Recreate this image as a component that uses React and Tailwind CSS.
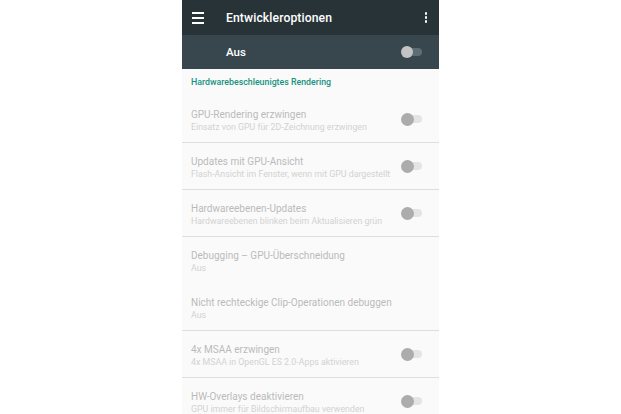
import React from "react";

const rows = [
  { t: "GPU-Rendering erzwingen", s: "Einsatz von GPU für 2D-Zeichnung erzwingen", sw: true, div: true },
  { t: "Updates mit GPU-Ansicht", s: "Flash-Ansicht im Fenster, wenn mit GPU dargestellt", sw: true, div: true },
  { t: "Hardwareebenen-Updates", s: "Hardwareebenen blinken beim Aktualisieren grün", sw: true, div: true },
  { t: "Debugging – GPU-Überschneidung", s: "Aus", sw: false, div: false },
  { t: "Nicht rechteckige Clip-Operationen debuggen", s: "Aus", sw: false, div: true },
  { t: "4x MSAA erzwingen", s: "4x MSAA in OpenGL ES 2.0-Apps aktivieren", sw: true, div: true },
  { t: "HW-Overlays deaktivieren", s: "GPU immer für Bildschirmaufbau verwenden", sw: true, div: false },
];

function RowSwitch() {
  return (
    <div className="relative w-[21px] h-[13px] flex items-center shrink-0">
      <div className="absolute left-[5px] right-0 h-[8px] rounded-full bg-[#e4e4e4]" />
      <div className="absolute left-0 w-[13px] h-[13px] rounded-full bg-[#acacac]" />
    </div>
  );
}

export default function App() {
  return (
    <div className="w-full min-h-[414px] bg-white" style={{ fontFamily: "Roboto, 'Noto Sans', sans-serif" }}>
      <div className="mx-auto w-[257px] h-[414px] overflow-hidden bg-[#fafafa]">
        <div className="h-[35px] bg-[#283338] flex items-center">
          <div className="w-[44px] pl-[10px] flex flex-col gap-[3px]">
            <div className="w-[12px] h-[2px] bg-white" />
            <div className="w-[12px] h-[2px] bg-white" />
            <div className="w-[12px] h-[2px] bg-white" />
          </div>
          <div className="flex-1 pt-[1px] text-white text-[12.2px] font-medium tracking-[0.1px]">Entwickleroptionen</div>
          <div className="w-[14px] mr-[6px] flex flex-col items-center gap-[1.5px]">
            <div className="w-[2.5px] h-[2.5px] rounded-full bg-white" />
            <div className="w-[2.5px] h-[2.5px] rounded-full bg-white" />
            <div className="w-[2.5px] h-[2.5px] rounded-full bg-white" />
          </div>
        </div>
        <div className="h-[34px] bg-[#38474e] flex items-center">
          <div className="w-[44px]" />
          <div className="flex-1 pt-[2px] text-white text-[11.5px] font-medium">Aus</div>
          <div className="relative w-[21px] h-[12px] mr-[17px] flex items-center">
            <div className="absolute left-[5px] right-0 h-[8px] rounded-full bg-[#5d6d74]" />
            <div className="absolute left-0 w-[12px] h-[12px] rounded-full bg-[#c4c4c4]" />
          </div>
        </div>
        <div className="h-[27px] flex items-center pl-[9px] text-[8.8px] font-medium text-[#16927f]">
          Hardwarebeschleunigtes Rendering
        </div>
        {rows.map((r, i) => (
          <div key={i} className={"h-[47px] flex items-center pl-[9px] pr-[17px] " + (r.div ? "border-b border-[#dedede]" : "border-b border-transparent")}>
            <div className="flex-1 flex flex-col pt-[3px]">
              <div className="text-[10px] leading-[13px] text-[#bababa] whitespace-nowrap">{r.t}</div>
              <div className="text-[8.8px] leading-[12px] text-[#d2d2d2] whitespace-nowrap">{r.s}</div>
            </div>
            {r.sw && <RowSwitch />}
          </div>
        ))}
      </div>
    </div>
  );
}
